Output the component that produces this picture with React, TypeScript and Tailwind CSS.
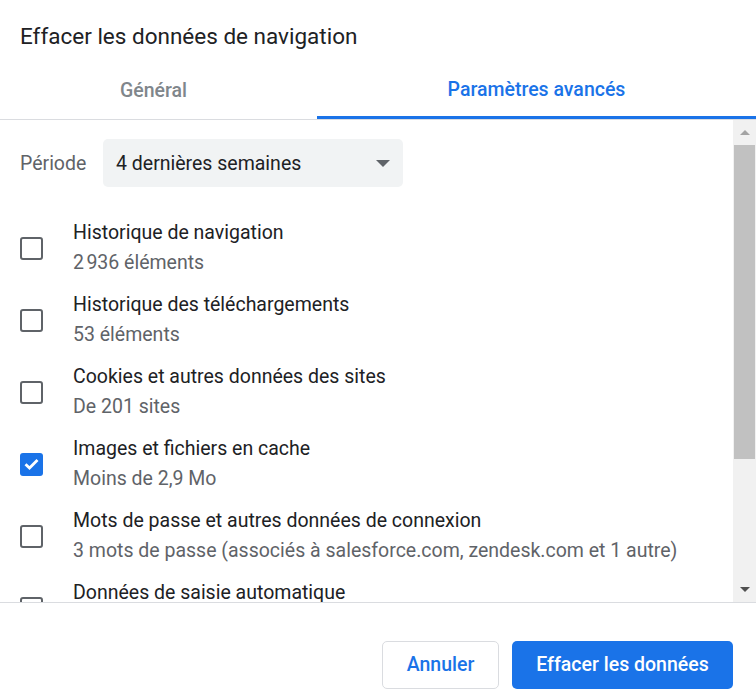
import React from "react";

const items = [
  { title: "Historique de navigation", sub: "2\u202f936 éléments", checked: false },
  { title: "Historique des téléchargements", sub: "53 éléments", checked: false },
  { title: "Cookies et autres données des sites", sub: "De 201 sites", checked: false },
  { title: "Images et fichiers en cache", sub: "Moins de 2,9 Mo", checked: true },
  {
    title: "Mots de passe et autres données de connexion",
    sub: "3 mots de passe (associés à salesforce.com, zendesk.com et 1 autre)",
    checked: false,
  },
  { title: "Données de saisie automatique", sub: "", checked: false },
];

const Checkbox = ({ checked }: { checked: boolean }) =>
  checked ? (
    <div className="w-[23px] h-[23px] rounded-[3px] bg-[#1a73e8] flex items-center justify-center">
      <svg width="15" height="12" viewBox="0 0 15 12">
        <path d="M1.5 6.2 L5.5 10 L13.5 2" fill="none" stroke="white" strokeWidth="2.8" />
      </svg>
    </div>
  ) : (
    <div className="w-[23px] h-[23px] rounded-[3px] border-[2.5px] border-[#5f6368]" />
  );

export default function App() {
  return (
    <div
      className="w-[756px] h-[691px] bg-white flex flex-col overflow-hidden"
      style={{ fontFamily: "Roboto, 'Liberation Sans', sans-serif" }}
    >
      <div className="pt-[21px] pl-5 text-[22.5px] leading-[30px] text-[#202124]">
        Effacer les données de navigation
      </div>

      <div className="mt-[9px] flex border-b border-[#dadce0]">
        <div className="w-[317px] h-[59px] flex items-center justify-center pr-[10px] pt-[3px] text-[19.5px] font-medium text-[#80868b]">
          Général
        </div>
        <div className="flex-1 h-[59px] flex items-center justify-center pt-[3px] text-[19.5px] font-medium text-[#1a73e8] border-b-[3px] border-[#1a73e8]">
          Paramètres avancés
        </div>
      </div>

      <div className="h-[483px] flex border-b border-[#dadce0]">
        <div className="flex-1 overflow-hidden">
          <div className="mt-[19px] flex items-center pl-5">
            <span className="text-[19.5px] text-[#5f6368] w-[83px] pt-[2px]">Période</span>
            <div className="w-[300px] h-[48px] rounded-[5px] bg-[#f1f3f4] flex items-center justify-between pl-[13px] pr-[13px]">
              <span className="text-[19.5px] text-[#202124] pt-[2px]">4 dernières semaines</span>
              <svg width="14" height="7" viewBox="0 0 14 7">
                <path d="M0 0 L14 0 L7 7 Z" fill="#5f6368" />
              </svg>
            </div>
          </div>

          <div className="mt-[31px] flex flex-col gap-3">
            {items.map((it) => (
              <div key={it.title} className="flex items-center">
                <div className="w-[73px] pl-5 flex-none">
                  <Checkbox checked={it.checked} />
                </div>
                <div className="flex flex-col text-[19.5px] leading-[30px]">
                  <span className="text-[#202124]">{it.title}</span>
                  <span className="text-[#5f6368] h-[30px]">{it.sub}</span>
                </div>
              </div>
            ))}
          </div>
        </div>

        <div className="w-[23px] bg-[#f1f1f1] flex flex-col items-center">
          <div className="h-[25px] flex items-center justify-center">
            <svg width="10" height="5" viewBox="0 0 10 5">
              <path d="M0 5 L10 5 L5 0 Z" fill="#a3a3a3" />
            </svg>
          </div>
          <div className="w-[21px] h-[314px] bg-[#c1c1c1]" />
          <div className="flex-1" />
          <div className="h-[25px] flex items-center justify-center">
            <svg width="10" height="5" viewBox="0 0 10 5">
              <path d="M0 0 L10 0 L5 5 Z" fill="#505050" />
            </svg>
          </div>
        </div>
      </div>

      <div className="flex justify-end gap-[13px] pt-[38px] pr-[23px]">
        <button className="w-[117px] h-[48px] rounded-[5px] border border-[#dadce0] bg-white text-[19.5px] font-medium text-[#1a73e8]">
          Annuler
        </button>
        <button className="w-[221px] h-[48px] rounded-[5px] bg-[#1a73e8] text-[19.5px] font-medium text-white">
          Effacer les données
        </button>
      </div>
    </div>
  );
}
